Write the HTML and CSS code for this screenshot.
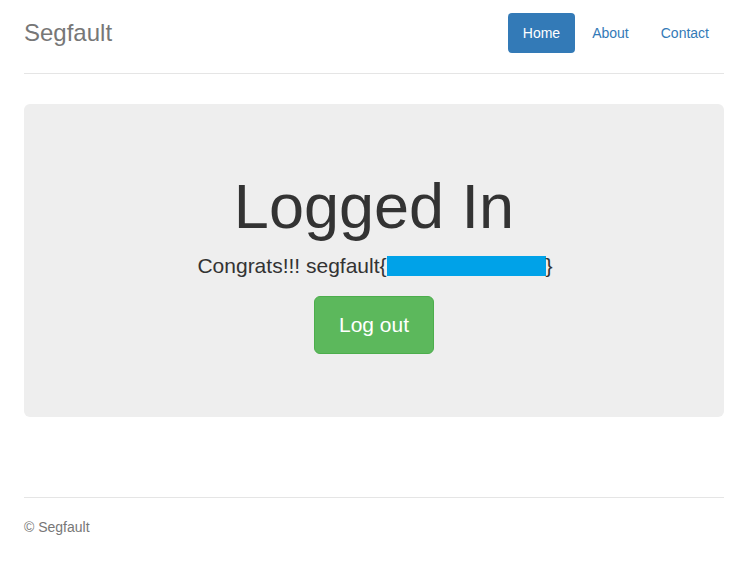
FILE: index.html
```html
<!DOCTYPE html>
<html>
<head>
<meta charset="utf-8">
<title>Segfault</title>
<link rel="stylesheet" href="styles.css">
</head>
<body>
<div class="container">
  <header class="header">
    <h3 class="brand">Segfault</h3>
    <nav class="nav">
      <a class="pill active" href="#">Home</a>
      <a class="pill" href="#">About</a>
      <a class="pill" href="#">Contact</a>
    </nav>
  </header>
  <main class="jumbotron">
    <h1 class="title">Logged In</h1>
    <p class="lead">Congrats!!! segfault{<span class="redact"></span>}</p>
    <a class="btn" href="#">Log out</a>
  </main>
  <footer class="footer">
    <p>&copy; Segfault</p>
  </footer>
</div>
</body>
</html>
```
FILE: styles.css
```css
* { box-sizing: border-box; }
html, body { margin: 0; padding: 0; background: #fff; }
body {
  font-family: "Liberation Sans", Arial, sans-serif;
  font-size: 14px;
  line-height: 1.42857;
  color: #333;
}
.container {
  width: 750px;
  padding: 0 26px 0 24px;
}
.header {
  display: flex;
  justify-content: space-between;
  align-items: center;
  padding-top: 13px;
  padding-bottom: 20px;
  border-bottom: 1px solid #e5e5e5;
}
.brand {
  margin: 0;
  font-size: 24px;
  font-weight: 400;
  line-height: 40px;
  color: #777;
}
.nav { display: flex; gap: 2px; }
.pill {
  display: block;
  padding: 10px 15px;
  line-height: 20px;
  border-radius: 4px;
  color: #337ab7;
  text-decoration: none;
}
.pill.active { background: #337ab7; color: #fff; }
.jumbotron {
  margin-top: 30px;
  background: #eee;
  border-radius: 6px;
  padding: 48px 60px 63px;
  text-align: center;
  display: flex;
  flex-direction: column;
  align-items: center;
}
.title {
  margin: 20px 0 10px;
  font-size: 63px;
  font-weight: 400;
  line-height: 1.1;
  color: #333;
}
.lead {
  margin: 0 0 15px 2px;
  font-size: 21px;
  line-height: 30px;
  font-weight: 300;
}
.redact {
  display: inline-block;
  width: 159px;
  height: 20px;
  vertical-align: -3px;
  background: #00a2e8;
}
.btn {
  display: inline-block;
  padding: 14px 24px;
  font-size: 21px;
  line-height: 28px;
  color: #fff;
  background: #5cb85c;
  border: 1px solid #4cae4c;
  border-radius: 6px;
  text-decoration: none;
}
.footer {
  margin-top: 80px;
  padding-top: 20px;
  border-top: 1px solid #e5e5e5;
  color: #777;
}
.footer p { margin: 0 0 10px; }
```
